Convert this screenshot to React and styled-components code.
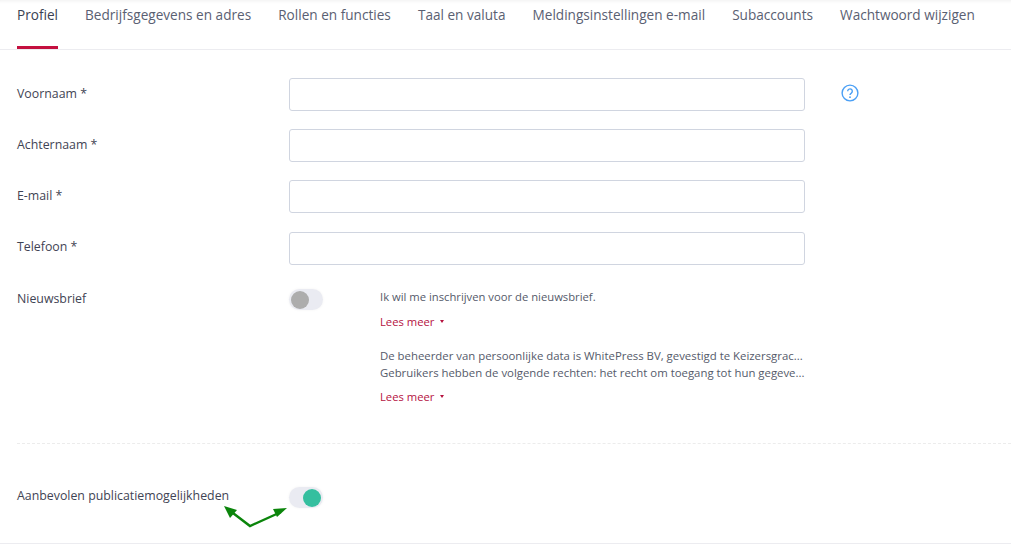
import styled, { createGlobalStyle } from 'styled-components';

const GlobalStyle = createGlobalStyle`
    html, body {
        margin: 0;
        padding: 0;
        background: #ffffff;
        overflow: hidden;
    }
    body {
        font-family: 'Open Sans', sans-serif;
        color: #4a4a5a;
    }
`;

const tabs = [
    'Profiel',
    'Bedrijfsgegevens en adres',
    'Rollen en functies',
    'Taal en valuta',
    'Meldingsinstellingen e-mail',
    'Subaccounts',
    'Wachtwoord wijzigen',
];

const fields = ['Voornaam *', 'Achternaam *', 'E-mail *', 'Telefoon *'];

const App = () => {
    return (
        <Page>
            <GlobalStyle />
            <TabBar>
                {tabs.map((tab, index) => (
                    <Tab key={tab} $active={index === 0}>{tab}</Tab>
                ))}
            </TabBar>
            <Form>
                {fields.map((field, index) => (
                    <FieldRow key={field}>
                        <Label>{field}</Label>
                        <Input type='text' />
                        {index === 0 && (
                            <HelpIcon viewBox='0 0 18 18'>
                                <circle cx='9' cy='9' r='7.9' fill='none' stroke='#4a9ff5' strokeWidth='1.4' />
                                <path d='M6.7 7.2a2.3 2.3 0 1 1 3.6 1.9c-.8.5-1.3 1-1.3 1.9' fill='none' stroke='#4a9ff5' strokeWidth='1.4' />
                                <circle cx='9' cy='13.2' r='0.9' fill='#4a9ff5' />
                            </HelpIcon>
                        )}
                    </FieldRow>
                ))}
                <NewsletterRow>
                    <NewsletterLabel>Nieuwsbrief</NewsletterLabel>
                    <Toggle />
                    <Consent>
                        <ConsentText>Ik wil me inschrijven voor de nieuwsbrief.</ConsentText>
                        <ReadMore>Lees meer <Caret /></ReadMore>
                        <ConsentBlock>
                            <ConsentLine>De beheerder van persoonlijke data is WhitePress BV, gevestigd te Keizersgrac...</ConsentLine>
                            <ConsentLine>Gebruikers hebben de volgende rechten: het recht om toegang tot hun gegeve...</ConsentLine>
                        </ConsentBlock>
                        <ReadMore>Lees meer <Caret /></ReadMore>
                    </Consent>
                </NewsletterRow>
                <Divider />
                <RecommendRow>
                    <RecommendLabel>Aanbevolen publicatiemogelijkheden</RecommendLabel>
                    <Toggle $on />
                    <Arrows viewBox='0 0 64 22'>
                        <path d='M5 4L26 20L57 6' fill='none' stroke='#0b850b' strokeWidth='2.4' />
                        <path d='M0 0L13 4L6 12Z' fill='#0b850b' />
                        <path d='M63 2L49 3L53 11Z' fill='#0b850b' />
                    </Arrows>
                </RecommendRow>
            </Form>
            <BottomLine />
        </Page>
    );
};
export default App;

const Page = styled.div`
    width: 1011px;
    height: 544px;
    display: flex;
    flex-direction: column;
    overflow: hidden;
`;
const TabBar = styled.div`
    height: 49px;
    padding-left: 17px;
    display: flex;
    gap: 27.1px;
    border-bottom: 1px solid #ececf0;
    box-shadow: inset 0 4px 4px -4px #e8e8e8;
    flex-shrink: 0;
`;
const Tab = styled.div`
    height: 46px;
    line-height: 30px;
    font-size: 13.6px;
    white-space: nowrap;
    color: ${props => props.$active ? '#3a3f52' : '#5a6072'};
    border-bottom: 3px solid ${props => props.$active ? '#c4103f' : 'transparent'};
`;
const Form = styled.div`
    flex: 1;
    padding: 28px 0 0 17px;
    display: flex;
    flex-direction: column;
    position: relative;
`;
const FieldRow = styled.div`
    height: 33px;
    margin-bottom: 18.2px;
    display: grid;
    grid-template-columns: 272px 516px 36px 20px;
    align-items: center;
`;
const Label = styled.div`
    font-size: 12.35px;
    line-height: 30px;
    color: #3f4454;
    white-space: nowrap;
    margin-top: -2px;
`;
const NewsletterLabel = styled(Label)`
    margin-top: -3px;
`;
const RecommendLabel = styled(Label)`
    margin-top: -1px;
`;
const Input = styled.input`
    box-sizing: border-box;
    width: 516px;
    height: 33px;
    border: 1px solid #d0d5e0;
    border-radius: 3px;
    background: #ffffff;
    padding: 0 10px;
    outline: none;
`;
const HelpIcon = styled.svg`
    grid-column: 4;
    width: 18px;
    height: 18px;
    margin-top: -3px;
`;
const NewsletterRow = styled.div`
    display: grid;
    grid-template-columns: 272px 91px 430px;
    align-items: start;
    height: 155px;
    margin-top: 4px;
`;
const Toggle = styled.div`
    width: 34px;
    height: 21px;
    border-radius: 11px;
    background: #eaebf2;
    box-shadow: 0 0 3px rgba(0, 0, 0, 0.05);
    position: relative;
    margin-top: 2px;

    &::after {
        content: '';
        position: absolute;
        top: 2px;
        left: ${props => props.$on ? '14px' : '2px'};
        width: 18px;
        height: 18px;
        border-radius: 50%;
        background: ${props => props.$on ? '#35bf9f' : '#adadad'};
    }
`;
const Consent = styled.div`
    display: flex;
    flex-direction: column;
    font-size: 11.25px;
    color: #555a6a;
    width: 430px;
`;
const ConsentText = styled.div`
    line-height: 18px;
    margin-top: 1px;
`;
const ReadMore = styled.div`
    color: #b5123f;
    line-height: 18px;
    margin-top: 7px;
    display: flex;
    align-items: center;
    gap: 6px;
`;
const Caret = styled.span`
    width: 0;
    height: 0;
    border-left: 2px solid transparent;
    border-right: 2px solid transparent;
    border-top: 3px solid #b5123f;
`;
const ConsentBlock = styled.div`
    margin-top: 16px;
`;
const ConsentLine = styled.div`
    font-size: 11.38px;
    line-height: 17px;
    white-space: nowrap;
`;
const Divider = styled.div`
    border-top: 1px dashed #ececec;
    margin-top: 1px;
`;
const RecommendRow = styled.div`
    display: grid;
    grid-template-columns: 272px 34px;
    align-items: center;
    margin-top: 38px;
    position: relative;
`;
const Arrows = styled.svg`
    position: absolute;
    left: 207px;
    top: 24px;
    width: 64px;
    height: 22px;
`;
const BottomLine = styled.div`
    height: 1px;
    background: #ececf0;
    flex-shrink: 0;
`;
